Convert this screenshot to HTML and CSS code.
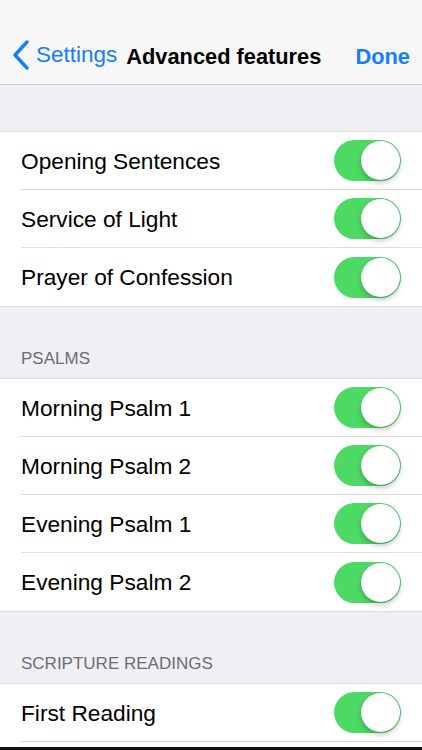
FILE: index.html
```html
<!DOCTYPE html>
<html>
<head>
<meta charset="utf-8">
<link rel="stylesheet" href="styles.css">
</head>
<body>
<div class="screen">
  <header class="nav">
    <div class="back">
      <svg class="chev" width="18" height="30" viewBox="0 0 18 30"><path d="M15 2 L3 15 L15 28" fill="none" stroke="#157efb" stroke-width="3.4" stroke-linecap="round" stroke-linejoin="round"/></svg>
      <span>Settings</span>
    </div>
    <div class="title">Advanced features</div>
    <div class="done">Done</div>
  </header>
  <div class="gap top"></div>
  <div class="group">
    <div class="row"><span class="label">Opening Sentences</span><span class="switch"><span class="knob"></span></span></div>
    <div class="row"><span class="label">Service of Light</span><span class="switch"><span class="knob"></span></span></div>
    <div class="row last"><span class="label">Prayer of Confession</span><span class="switch"><span class="knob"></span></span></div>
  </div>
  <div class="gap head"><span>PSALMS</span></div>
  <div class="group">
    <div class="row"><span class="label">Morning Psalm 1</span><span class="switch"><span class="knob"></span></span></div>
    <div class="row"><span class="label">Morning Psalm 2</span><span class="switch"><span class="knob"></span></span></div>
    <div class="row"><span class="label">Evening Psalm 1</span><span class="switch"><span class="knob"></span></span></div>
    <div class="row last"><span class="label">Evening Psalm 2</span><span class="switch"><span class="knob"></span></span></div>
  </div>
  <div class="gap head"><span>SCRIPTURE READINGS</span></div>
  <div class="group">
    <div class="row"><span class="label">First Reading</span><span class="switch"><span class="knob"></span></span></div>
    <div class="row"><span class="label"></span><span class="switch"><span class="knob"></span></span></div>
  </div>
  <div class="bottombar"></div>
</div>
</body>
</html>
```
FILE: styles.css
```css
html, body { margin: 0; padding: 0; }
body { background: #efeff4; font-family: "Liberation Sans", Arial, sans-serif; }
.screen { width: 422px; height: 750px; overflow: hidden; position: relative; background: #efeff4; }
.nav {
  height: 85px; box-sizing: border-box; background: #f7f7f8;
  border-bottom: 1px solid #c8c7cc;
  display: flex; align-items: flex-end; padding: 0 12px 14px 12px;
  font-size: 22.5px;
}
.back { display: flex; align-items: center; color: #157efb; }
.chev { margin-right: 6px; margin-top: 1px; }
.title { font-weight: bold; color: #000; margin-left: 9px; font-size: 21.8px; }
.done { margin-left: auto; color: #157efb; font-weight: bold; font-size: 21.8px; }
.gap.top { height: 46px; border-bottom: 1px solid #dcdce0; }
.gap.head { height: 73px; box-sizing: border-box; border-bottom: 1px solid #dcdce0; border-top: 1px solid #dcdce0; display: flex; align-items: flex-end; padding: 0 0 9px 21px; }
.gap.head span { color: #6d6d72; font-size: 17px; }
.group { background: #fff; }
.row { height: 58px; box-sizing: border-box; margin-left: 21px; padding-right: 21px; border-bottom: 1px solid #dcdce0; display: flex; align-items: center; justify-content: space-between; }
.row.last { border-bottom: none; }
.label { font-size: 22.7px; color: #000; margin-top: 1px; }
.switch { width: 67px; height: 41px; border-radius: 21px; background: #4cd964; position: relative; box-sizing: border-box; }
.knob { position: absolute; right: 1px; top: 1px; width: 39px; height: 39px; border-radius: 50%; background: #fff; box-shadow: 0 3px 5px rgba(0,0,0,0.22), 0 0 1px rgba(0,0,0,0.2); }
.bottombar { position: absolute; left: 0; right: 0; bottom: 0; height: 3px; background: #111; }
```
